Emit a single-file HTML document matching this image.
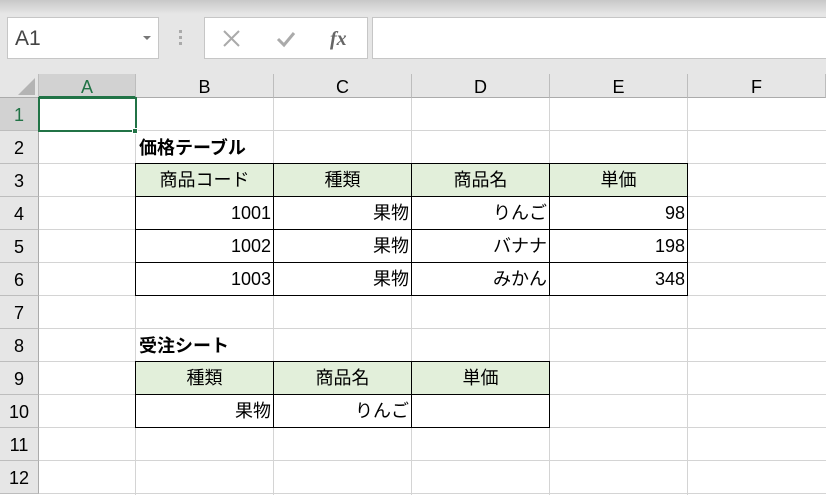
<!DOCTYPE html>
<html><head><meta charset="utf-8"><style>
*{margin:0;padding:0;box-sizing:border-box}
body{width:826px;height:495px;overflow:hidden;background:#fff;position:relative;font-family:"Liberation Sans","Noto Sans CJK JP",sans-serif;}
.a{position:absolute}
.top{left:0;top:0;width:826px;height:74px;background:#e6e6e6}
.grad{left:0;top:0;width:826px;height:14px;background:linear-gradient(#c8c8c8,#e6e6e6)}
.box{background:#fff;border:1px solid #c6c6c6}
.ch{top:74px;height:24px;background:#e6e6e6;border-right:1px solid #bdbdbd;border-bottom:1px solid #ababab;text-align:center;font-size:18px;line-height:26px;color:#000}
.rh{left:0;width:39px;height:33px;background:#e6e6e6;border-bottom:1px solid #bdbdbd;border-right:1px solid #ababab;text-align:center;font-size:18px;line-height:34px}
.vl{top:98px;width:1px;height:397px;background:#d4d4d4}
.hl{left:39px;width:787px;height:1px;background:#d4d4d4}
.c{height:34px;border:1px solid #000;font-size:18px;line-height:33px;padding:0 2px}
.g{background:#e2efda;text-align:center}
.r{text-align:right}
.t{font-size:18px;font-weight:bold;line-height:34px}
</style></head><body>
<div class="a top"></div><div class="a grad"></div>
<div class="a box" style="left:7px;top:17px;width:152px;height:42px;font-size:21px;color:#444;line-height:42px;padding-left:7px">A1</div>
<div class="a" style="left:143px;top:36px;border-left:4px solid transparent;border-right:4px solid transparent;border-top:4px solid #777"></div>
<div class="a" style="left:179px;top:30px;width:3px;height:3px;background:#aaa;box-shadow:0 6px #aaa,0 12px #aaa"></div>
<div class="a box" style="left:204px;top:17px;width:164px;height:42px"></div>
<svg class="a" style="left:220px;top:28px" width="140" height="22"><path d="M4 3L19 18M19 3L4 18" stroke="#aaa" stroke-width="2"/><path d="M58 11L64 17L74 5" stroke="#aaa" stroke-width="3" fill="none"/><text x="110" y="17" font-family="Liberation Serif,serif" font-style="italic" font-weight="bold" font-size="20" fill="#666">fx</text></svg>
<div class="a box" style="left:372px;top:17px;width:460px;height:42px"></div>
<div class="a" style="left:0;top:74px;width:39px;height:24px;background:#e6e6e6;border-right:1px solid #bdbdbd;border-bottom:1px solid #ababab"></div>
<div class="a" style="left:18px;top:78px;border-left:17px solid transparent;border-bottom:17px solid #b4b4b4"></div>
<div class="a ch" style="left:39px;width:97px;background:#d2d2d2;color:#217346;border-bottom:2px solid #217346">A</div>
<div class="a ch" style="left:136px;width:138px">B</div>
<div class="a ch" style="left:274px;width:138px">C</div>
<div class="a ch" style="left:412px;width:138px">D</div>
<div class="a ch" style="left:550px;width:138px">E</div>
<div class="a ch" style="left:688px;width:138px">F</div>
<div class="a rh" style="top:98px;background:#d2d2d2;color:#217346">1</div>
<div class="a rh" style="top:131px">2</div><div class="a rh" style="top:164px">3</div><div class="a rh" style="top:197px">4</div><div class="a rh" style="top:230px">5</div><div class="a rh" style="top:263px">6</div><div class="a rh" style="top:296px">7</div><div class="a rh" style="top:329px">8</div><div class="a rh" style="top:362px">9</div><div class="a rh" style="top:395px">10</div><div class="a rh" style="top:428px">11</div><div class="a rh" style="top:461px">12</div>
<div class="a vl" style="left:135px"></div><div class="a vl" style="left:273px"></div><div class="a vl" style="left:411px"></div><div class="a vl" style="left:549px"></div><div class="a vl" style="left:687px"></div>
<div class="a hl" style="top:130px"></div><div class="a hl" style="top:163px"></div><div class="a hl" style="top:196px"></div><div class="a hl" style="top:229px"></div><div class="a hl" style="top:262px"></div><div class="a hl" style="top:295px"></div><div class="a hl" style="top:328px"></div><div class="a hl" style="top:361px"></div><div class="a hl" style="top:394px"></div><div class="a hl" style="top:427px"></div><div class="a hl" style="top:460px"></div><div class="a hl" style="top:493px"></div>
<div class="a" style="left:38px;top:97px;width:99px;height:35px;border:2px solid #217346"></div>
<div class="a" style="left:132px;top:128px;width:6px;height:6px;background:#217346;border:1px solid #fff"></div>
<div class="a t" style="left:139px;top:131px">価格テーブル</div>
<div class="a c g" style="left:135px;top:163px;width:139px">商品コード</div>
<div class="a c g" style="left:273px;top:163px;width:139px">種類</div>
<div class="a c g" style="left:411px;top:163px;width:139px">商品名</div>
<div class="a c g" style="left:549px;top:163px;width:139px">単価</div>
<div class="a c r" style="left:135px;top:196px;width:139px">1001</div><div class="a c r" style="left:273px;top:196px;width:139px">果物</div><div class="a c r" style="left:411px;top:196px;width:139px">りんご</div><div class="a c r" style="left:549px;top:196px;width:139px">98</div>
<div class="a c r" style="left:135px;top:229px;width:139px">1002</div><div class="a c r" style="left:273px;top:229px;width:139px">果物</div><div class="a c r" style="left:411px;top:229px;width:139px">バナナ</div><div class="a c r" style="left:549px;top:229px;width:139px">198</div>
<div class="a c r" style="left:135px;top:262px;width:139px">1003</div><div class="a c r" style="left:273px;top:262px;width:139px">果物</div><div class="a c r" style="left:411px;top:262px;width:139px">みかん</div><div class="a c r" style="left:549px;top:262px;width:139px">348</div>
<div class="a t" style="left:139px;top:329px">受注シート</div>
<div class="a c g" style="left:135px;top:361px;width:139px">種類</div>
<div class="a c g" style="left:273px;top:361px;width:139px">商品名</div>
<div class="a c g" style="left:411px;top:361px;width:139px">単価</div>
<div class="a c r" style="left:135px;top:394px;width:139px">果物</div><div class="a c r" style="left:273px;top:394px;width:139px">りんご</div><div class="a c r" style="left:411px;top:394px;width:139px"></div>
</body></html>
